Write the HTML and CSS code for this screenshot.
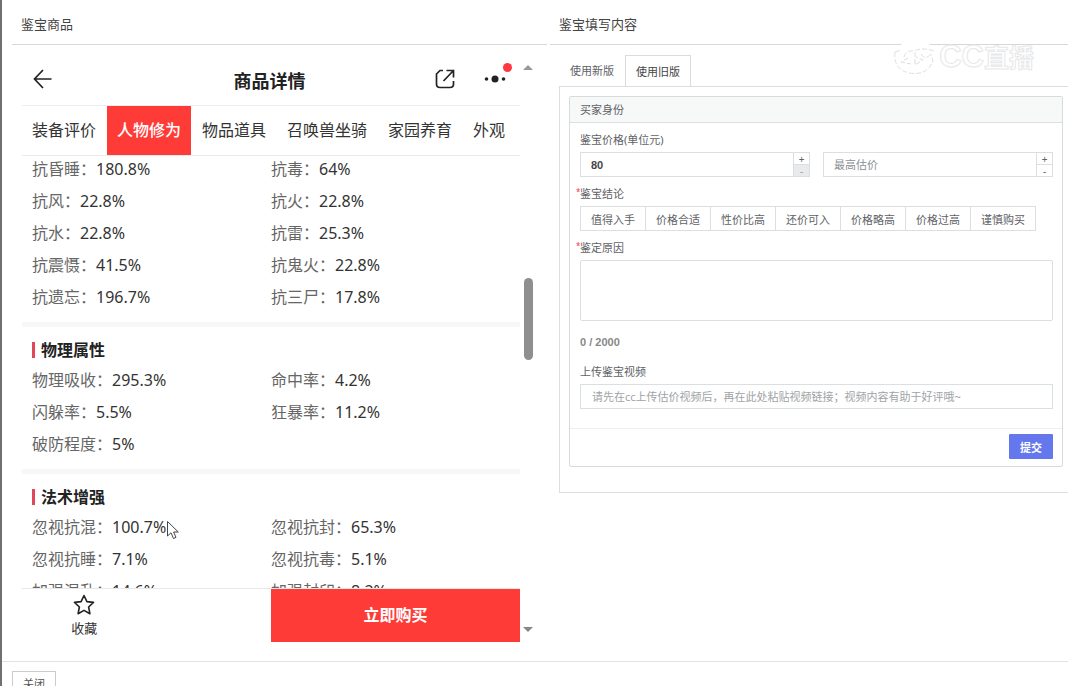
FILE: index.html
```html
<!DOCTYPE html>
<html lang="zh-CN">
<head>
<meta charset="utf-8">
<title>鉴宝</title>
<link rel="stylesheet" href="styles.css">
</head>
<body>
<div class="shell">
  <main class="panes">
    <section class="pane pane-goods">
      <h2 class="pane-title">鉴宝商品</h2>
      <div class="viewer">
        <div class="phone">
          <header class="nav">
            <button class="icon-btn" aria-label="返回"><svg width="20" height="20" viewBox="0 0 20 20" fill="none" stroke="#222" stroke-width="1.7"><path d="M18.500 10H1.500M10 1L1.500 10L10 19"/></svg></button>
            <h1 class="nav-title">商品详情</h1>
            <div class="nav-actions">
              <button class="icon-btn" aria-label="分享"><svg width="20" height="20" viewBox="0 0 20 20" fill="none" stroke="#222" stroke-width="1.700"><path d="M8 1.500H5L1.500 5V15Q1.500 18.500 5 18.500H15Q18.500 18.500 18.500 15V12M11.500 1.500H18.500V8.500M18.500 1.500L8.500 12"/></svg></button>
              <button class="icon-btn more" aria-label="更多"><svg width="22" height="20" viewBox="0 0 22 20" fill="#222"><circle cx="2.500" cy="10" r="1.800"/><circle cx="11" cy="10" r="3.500"/><circle cx="19.500" cy="10" r="1.800"/></svg><span class="dot"></span></button>
            </div>
          </header>
          <nav class="tabs">
            <a class="tab" href="#a">装备评价</a>
            <a class="tab active" href="#b">人物修为</a>
            <a class="tab" href="#c">物品道具</a>
            <a class="tab" href="#d">召唤兽坐骑</a>
            <a class="tab" href="#e">家园养育</a>
            <a class="tab" href="#f">外观</a>
          </nav>
          <div class="list">
            <section class="group">
              <dl class="stats">
                <div class="stat"><dt>抗昏睡：</dt><dd>180.8%</dd></div>
                <div class="stat"><dt>抗毒：</dt><dd>64%</dd></div>
                <div class="stat"><dt>抗风：</dt><dd>22.8%</dd></div>
                <div class="stat"><dt>抗火：</dt><dd>22.8%</dd></div>
                <div class="stat"><dt>抗水：</dt><dd>22.8%</dd></div>
                <div class="stat"><dt>抗雷：</dt><dd>25.3%</dd></div>
                <div class="stat"><dt>抗震慑：</dt><dd>41.5%</dd></div>
                <div class="stat"><dt>抗鬼火：</dt><dd>22.8%</dd></div>
                <div class="stat"><dt>抗遗忘：</dt><dd>196.7%</dd></div>
                <div class="stat"><dt>抗三尸：</dt><dd>17.8%</dd></div>
              </dl>
            </section>
            <section class="group">
              <h3 class="group-title">物理属性</h3>
              <dl class="stats">
                <div class="stat"><dt>物理吸收：</dt><dd>295.3%</dd></div>
                <div class="stat"><dt>命中率：</dt><dd>4.2%</dd></div>
                <div class="stat"><dt>闪躲率：</dt><dd>5.5%</dd></div>
                <div class="stat"><dt>狂暴率：</dt><dd>11.2%</dd></div>
                <div class="stat"><dt>破防程度：</dt><dd>5%</dd></div>
              </dl>
            </section>
            <section class="group">
              <h3 class="group-title">法术增强</h3>
              <dl class="stats">
                <div class="stat"><dt>忽视抗混：</dt><dd>100.7%</dd></div>
                <div class="stat"><dt>忽视抗封：</dt><dd>65.3%</dd></div>
                <div class="stat"><dt>忽视抗睡：</dt><dd>7.1%</dd></div>
                <div class="stat"><dt>忽视抗毒：</dt><dd>5.1%</dd></div>
                <div class="stat"><dt>加强混乱：</dt><dd>14.6%</dd></div>
                <div class="stat"><dt>加强封印：</dt><dd>8.2%</dd></div>
              </dl>
            </section>
          </div>
          <div class="buybar">
            <button class="fav"><svg width="22" height="22" viewBox="0 0 22 22" fill="none" stroke="#222" stroke-width="1.600" stroke-linejoin="round"><path d="M11 1.500L13.900 7.600L20.500 8.400L15.600 13L16.900 19.700L11 16.400L5.100 19.700L6.400 13L1.500 8.400L8.100 7.600Z"/></svg>收藏</button>
            <button class="buy">立即购买</button>
          </div>
        </div>
        <div class="scroll" aria-hidden="true">
          <span class="arrow up"></span>
          <span class="track"><span class="thumb"></span></span>
          <span class="arrow down"></span>
        </div>
      </div>
    </section>

    <section class="pane pane-form">
      <h2 class="pane-title">鉴宝填写内容</h2>
      <div class="form-tabs">
        <button class="form-tab">使用新版</button>
        <button class="form-tab current">使用旧版</button>
      </div>
      <div class="form-box">
        <form class="card">
          <div class="card-head">买家身份</div>
          <div class="card-body">
            <label class="label" for="low">鉴宝价格(单位元)</label>
            <div class="prices">
              <div class="number">
                <input id="low" class="number-input filled" type="text" value="80">
                <div class="steps"><button type="button" class="step">+</button><button type="button" class="step off">-</button></div>
              </div>
              <div class="number">
                <input class="number-input" type="text" placeholder="最高估价" aria-label="最高估价">
                <div class="steps"><button type="button" class="step">+</button><button type="button" class="step">-</button></div>
              </div>
            </div>
            <div class="label required">鉴宝结论</div>
            <div class="choices">
              <button type="button" class="choice">值得入手</button>
              <button type="button" class="choice">价格合适</button>
              <button type="button" class="choice">性价比高</button>
              <button type="button" class="choice">还价可入</button>
              <button type="button" class="choice">价格略高</button>
              <button type="button" class="choice">价格过高</button>
              <button type="button" class="choice">谨慎购买</button>
            </div>
            <label class="label required" for="reason">鉴定原因</label>
            <textarea id="reason" class="reason"></textarea>
            <div class="count">0 / 2000</div>
            <label class="label" for="video">上传鉴宝视频</label>
            <input id="video" class="video" type="text" placeholder="请先在cc上传估价视频后，再在此处粘贴视频链接；视频内容有助于好评哦~">
          </div>
          <div class="card-foot"><button type="button" class="submit">提交</button></div>
        </form>
      </div>
    </section>
  </main>
  <footer class="foot"><button class="close">关闭</button></footer>
</div>
<div class="watermark">
  <svg width="44" height="40" viewBox="0 0 44 40" fill="none" stroke="#dcdfe0" stroke-width="1" stroke-dasharray="5 2"><path fill="#fff" stroke="none" d="M2 20Q4 5 22 1Q32 2 42 12Q44 34 24 38Q4 38 2 20Z"/><path d="M2 15Q0 32 16 36Q34 39 40 24L38 17M2 15L8 13M11 20Q13 13 21 14Q30 10 41 14M15 21L8 25L18 27M22 15V28L30 23L23 20M28 17Q32 24 38 17"/></svg>
  <span class="watermark-text"><span class="watermark-cc">CC</span>直播</span>
</div>
<svg class="cursor" width="14" height="20" viewBox="0 0 14 20" fill="#fff" stroke="#444" stroke-width="1"><path d="M1.500 1.500V16L5 12.800L7.500 18.500L10 17.400L7.600 12H12.300Z"/></svg>
</body>
</html>
```
FILE: styles.css
```css
* { box-sizing: border-box; }
body, h1, h2, h3, dl, dd { margin: 0; }
body {
  font-family: "Noto Sans", "Noto Sans CJK SC", sans-serif;
  color: #333;
  background: #fff;
}
button, input, textarea { font: inherit; color: inherit; }
button { padding: 0; border: 0; background: none; }
a { color: inherit; text-decoration: none; }

.shell {
  display: flex;
  flex-direction: column;
  height: 100vh;
  overflow: hidden;
  border-left: 2px solid #707070;
}
.panes {
  flex: 1;
  min-height: 0;
  display: grid;
  grid-template-columns: 535fr 518fr;
  column-gap: 3px;
  padding-left: 10px;
}
.pane { display: flex; flex-direction: column; min-width: 0; min-height: 0; }
.pane-title {
  padding: 12px 9px 8px;
  border-bottom: 1px solid #d4d8da;
  font-size: 13px;
  font-weight: 400;
  line-height: 24px;
  color: #444;
}

/* goods viewer */
.viewer {
  flex: 1;
  min-height: 0;
  display: flex;
  padding: 8px 11px 19px 10px;
}
.phone { flex: 1; min-width: 0; display: flex; flex-direction: column; }
.nav {
  display: grid;
  grid-template-columns: 1fr auto 1fr;
  align-items: center;
  height: 53px;
  padding: 0 14px 0 11px;
  border-bottom: 1px solid #eee;
}
.icon-btn { display: flex; justify-self: start; }
.nav-title { padding-top: 3px; font-size: 18px; line-height: 24px; color: #222; }
.nav-actions { display: flex; justify-self: end; gap: 29px; }
.more { position: relative; }
.dot {
  position: absolute;
  top: -6px;
  right: -6px;
  width: 9px;
  height: 9px;
  border-radius: 50%;
  background: #ff3840;
}
.tabs {
  display: flex;
  gap: 1px;
  border-bottom: 1px solid #eaeaea;
}
.tab { padding: 0 10px; font-size: 16px; line-height: 49px; white-space: nowrap; }
.tab.active { background: #ff3b37; color: #fff; font-weight: 500; }
.list { flex: 1; min-height: 0; overflow: hidden; }
.group { padding: 0 10px 12px; }
.group + .group { padding-top: 11px; border-top: 5px solid #f7f7f7; }
.group-title {
  display: flex;
  align-items: center;
  gap: 6px;
  margin-bottom: 5px;
  font-size: 16px;
  line-height: 24px;
  color: #222;
}
.group-title::before { content: ""; width: 3px; height: 16px; background: #e0485a; }
.stats { display: grid; grid-template-columns: 1fr 1fr; row-gap: 6px; }
.stat { display: flex; font-size: 16px; line-height: 26px; color: #333; }
.stat dt { color: #666; }
.buybar {
  display: grid;
  grid-template-columns: 1fr 1fr 2fr;
  height: 54px;
  border-top: 1px solid #e8e8e8;
}
.fav {
  display: flex;
  flex-direction: column;
  align-items: center;
  justify-content: center;
  gap: 2px;
  font-size: 13px;
  line-height: 20px;
}
.buy {
  grid-column: 3;
  padding-bottom: 3px;
  background: #ff3b37;
  color: #fff;
  font-size: 16px;
  font-weight: 700;
}
.scroll {
  display: flex;
  flex-direction: column;
  align-items: center;
  width: 16px;
  padding: 12px 0 10px;
}
.arrow { border: 5px solid transparent; }
.arrow.up { border-top: 0; border-bottom-color: #999; }
.arrow.down { border-bottom: 0; border-top-color: #888; }
.track { flex: 1; display: flex; flex-direction: column; padding-top: 208px; }
.thumb { width: 9px; height: 82px; border-radius: 5px; background: #8f8f8f; }

/* appraisal form */
.pane-form { font-size: 11px; color: #606266; }
.form-tabs { display: flex; padding: 10px 9px 0; }
.form-tab { padding: 0 10px; line-height: 30px; border: 1px solid transparent; border-bottom: 0; }
.form-tab.current {
  margin-bottom: -1px;
  border-color: #d8dcde;
  background: #fff;
  color: #444;
}
.form-box {
  margin-left: 9px;
  padding: 9px 5px 25px 9px;
  border: 1px solid #dcdfe2;
  border-right: 0;
}
.card { border: 1px solid #d8dbde; border-radius: 2px; }
.card-head {
  padding: 0 10px;
  border-bottom: 1px solid #dddfe1;
  background: #f7f8f8;
  line-height: 25px;
}
.card-body { padding: 5px 9px 19px 10px; }
.label { display: block; line-height: 24px; }
.required { position: relative; }
.required::before { content: "*"; position: absolute; left: -4px; top: -2px; font-size: 8px; color: #e8405a; }
.prices { display: grid; grid-template-columns: 1fr 1fr; gap: 13px; margin-bottom: 5px; }
.number { display: flex; height: 25px; border: 1px solid #dcdfe2; }
.number-input { flex: 1; min-width: 0; padding: 0 10px; border: 0; }
.number-input.filled { font-family: "Liberation Sans", sans-serif; font-weight: 700; color: #444; }
::placeholder { color: #8c8f93; opacity: 1; }
.steps { display: flex; flex-direction: column; width: 16px; border-left: 1px solid #dcdfe2; }
.step { flex: 1; font-size: 10px; line-height: 10px; }
.step + .step { border-top: 1px solid #dcdfe2; }
.step.off { background: #e8eaec; color: #999; }
.choices { display: flex; margin-bottom: 5px; }
.choice {
  height: 25px;
  padding: 0 10px;
  border: 1px solid #dcdfe2;
  border-right: 0;
}
.choice:last-child { border-right: 1px solid #dcdfe2; }
.reason {
  display: block;
  width: 100%;
  height: 61px;
  border: 1px solid #dcdfe2;
  border-radius: 2px;
  resize: none;
}
.count {
  margin: 9px 0 6px;
  font-family: "Liberation Sans", sans-serif;
  font-weight: 700;
  line-height: 24px;
  color: #888;
}
.video {
  display: block;
  width: 100%;
  height: 25px;
  padding: 0 11px;
  border: 1px solid #d8e0e2;
}
.video::placeholder { color: #a0a3a6; }
.card-foot {
  display: flex;
  justify-content: flex-end;
  padding: 5px 9px 7px;
  border-top: 1px solid #eceef0;
}
.submit {
  height: 25px;
  padding: 0 11px;
  border-radius: 1px;
  background: #6477ec;
  color: #fff;
  font-weight: 700;
}

.foot { flex: none; height: 25px; padding: 9px 10px 0; border-top: 1px solid #e2e2e2; }
.close {
  padding: 0 10px;
  border: 1px solid #ccc;
  font-size: 11px;
  line-height: 24px;
  color: #555;
}

/* floating overlays */
.watermark {
  position: absolute;
  top: 37px;
  right: 34px;
  display: flex;
  align-items: center;
  gap: 2px;
}
.watermark-text {
  font-size: 25px;
  font-weight: 700;
  line-height: 38px;
  color: #fff;
  -webkit-text-stroke: 1px #e6e8e9;
}
.watermark-cc { font-family: "Liberation Sans", sans-serif; font-size: 31px; }
.cursor { position: absolute; left: 166px; top: 520px; }
```
